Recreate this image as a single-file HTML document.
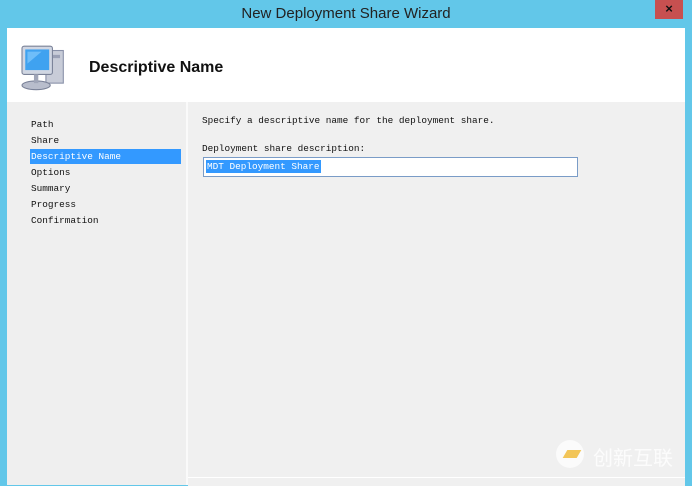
<!DOCTYPE html>
<html><head><style>
body{margin:0;width:692px;height:485px;background:#62c7e9;position:relative;overflow:hidden;font-family:"Liberation Mono",monospace;}
.t{position:absolute;top:5px;left:0;width:692px;text-align:center;font:15px "Liberation Sans",sans-serif;color:#222;}
.x{position:absolute;left:655px;top:0;width:28px;height:19px;background:#c75050;color:#111;font:bold 13px "Liberation Sans",sans-serif;text-align:center;line-height:18px;}
.hd{position:absolute;left:7px;top:28px;width:678px;height:74px;background:#fff;}
.hd h1{position:absolute;left:82px;top:31px;margin:0;font:bold 16px "Liberation Sans",sans-serif;color:#111;}
.dv{position:absolute;left:186px;top:102px;width:2px;height:383px;background:#fafafa;}
.lp{position:absolute;left:7px;top:102px;width:179px;height:383px;background:#efefef;}
.rp{position:absolute;left:188px;top:102px;width:497px;height:375px;background:#f0f0f0;}
.bl{position:absolute;left:188px;top:477px;width:497px;height:8px;background:#f0f0f0;border-top:1px solid #fff;}
.li{position:absolute;left:24px;font-size:9.4px;color:#111;}
.sel{background:#3399ff;color:#fff;left:23px;width:150px;padding-left:1px;height:15px;line-height:15px;}
.s{position:absolute;font-size:9.4px;color:#111;}
.in{position:absolute;left:15px;top:55px;width:373px;height:18px;background:#fff;border:1px solid #7a9cc7;}
.in span{position:absolute;left:2px;top:2px;background:#3399ff;color:#fff;font-size:9.4px;line-height:13px;padding:0 1px;}
</style></head><body>
<div class="t">New Deployment Share Wizard</div>
<div class="x">×</div>
<div class="hd">
<svg style="position:absolute;left:11px;top:16px" width="58" height="50" viewBox="0 0 50 46">
<rect x="24" y="6" width="16" height="30" fill="#c8ccd8" stroke="#8890a8"/>
<rect x="27" y="10" width="10" height="3" fill="#9aa0b5"/>
<rect x="2" y="2" width="28" height="26" rx="2" fill="#d0d6e2" stroke="#7a8298"/>
<rect x="5" y="5" width="22" height="19" fill="#3fa2f0"/>
<path d="M7 7 L20 7 L7 18Z" fill="#8fd0ff" opacity=".6"/>
<ellipse cx="15" cy="38" rx="13" ry="4" fill="#b8bdcc" stroke="#7a8298"/>
<rect x="13" y="28" width="4" height="8" fill="#a0a6b8"/>
</svg>
<h1>Descriptive Name</h1>
</div>
<div class="lp">
<div class="li" style="top:17px">Path</div>
<div class="li" style="top:33px">Share</div>
<div class="li sel" style="top:47px">Descriptive Name</div>
<div class="li" style="top:65px">Options</div>
<div class="li" style="top:81px">Summary</div>
<div class="li" style="top:97px">Progress</div>
<div class="li" style="top:113px">Confirmation</div>
</div>
<div class="dv"></div>
<div class="rp">
<div class="s" style="left:14px;top:13px">Specify a descriptive name for the deployment share.</div>
<div class="s" style="left:14px;top:41px">Deployment share description:</div>
<div class="in"><span>MDT Deployment Share</span></div>
<div style="position:absolute;left:368px;top:338px;width:28px;height:28px;border-radius:50%;background:#fff;opacity:.7"></div>
<div style="position:absolute;left:377px;top:348px;width:14px;height:8px;background:#f0b830;transform:skewX(-30deg);opacity:.8"></div>
<div style="position:absolute;left:405px;top:340px;font:20px 'Noto Sans CJK SC',sans-serif;color:#fff;opacity:.8">创新互联</div>
</div>
<div class="bl"></div>
</body></html>
